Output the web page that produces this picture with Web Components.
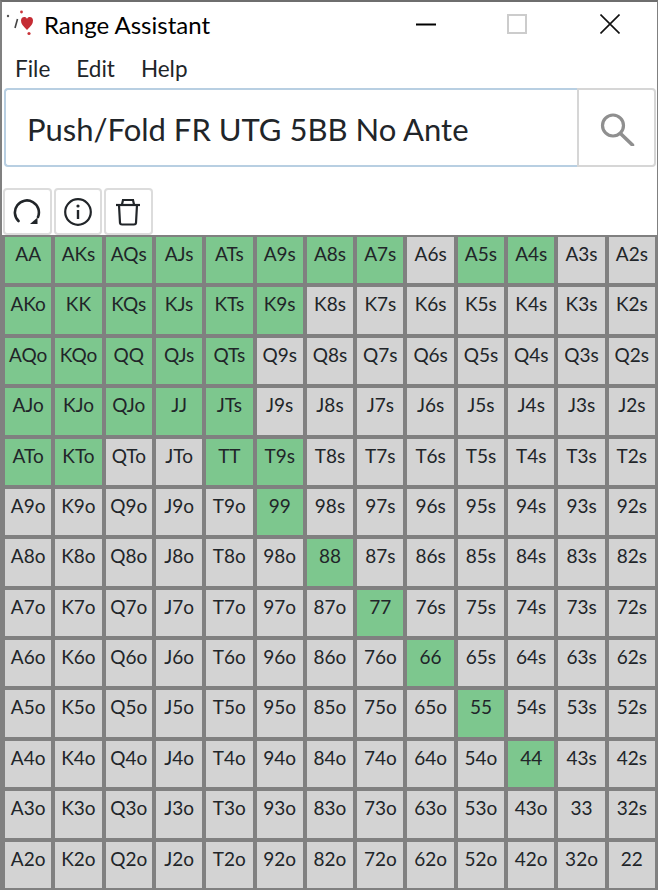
<!DOCTYPE html>
<html>
<head>
<meta charset="utf-8">
<title>Range Assistant</title>
<style>
    html, body { margin: 0; height: 100%; background: #fff; overflow: hidden; }
    body { font-family: Lato, "Noto Sans", sans-serif; color: #212529; }
    range-app { width: 658px; height: 890px; }
</style>
</head>
<body>
<range-app></range-app>
<script>
class TitleBar extends HTMLElement {
    constructor() {
        super();
        this.attachShadow({ mode: 'open' });
        this.shadowRoot.innerHTML = `
            <style>
                :host { display: flex; align-items: center; height: 46px; color: #000; }
                .logo { width: 42px; height: 40px; flex: none; }
                .name { font-size: 24px; flex: 1; padding-bottom: 2px; }
                .btns { display: flex; align-items: center; padding-bottom: 2px; }
                svg { display: block; }
            </style>
            <svg class="logo" viewBox="0 0 42 40">
                <circle cx="6" cy="11" r="1.2" fill="#555"/>
                <path d="M13 23 L15.5 14" stroke="#444" stroke-width="1.6"/>
                <circle cx="19.5" cy="7" r="1.4" fill="#c9343a"/>
                <circle cx="27" cy="28.5" r="1.6" fill="#c9343a"/>
                <path d="M25 25 C21 21 19 19 19 15.5 C19 11.5 24 11 25 14 C26 11 31 11.5 31 15.5 C31 19 29 21 25 25 Z" fill="#c52b33"/>
            </svg>
            <span class="name"><slot></slot></span>
            <div class="btns">
                <svg width="20" height="20" viewBox="0 0 20 20" style="margin-right:71px"><path d="M0 10.5 H20" stroke="#000" stroke-width="2"/></svg>
                <svg width="20" height="20" viewBox="0 0 20 20" style="margin-right:73px"><rect x="1" y="1" width="18" height="18" fill="none" stroke="#ccc" stroke-width="2"/></svg>
                <svg width="20" height="20" viewBox="0 0 20 20" style="margin-right:37px"><path d="M0.5 0.5 L19.5 19.5 M19.5 0.5 L0.5 19.5" stroke="#111" stroke-width="1.6"/></svg>
            </div>
        `;
    }
}
customElements.define('title-bar', TitleBar);

class MenuBar extends HTMLElement {
    constructor() {
        super();
        this.attachShadow({ mode: 'open' });
        this.shadowRoot.innerHTML = `
            <style>
                :host { display: flex; gap: 26px; height: 40px; align-items: center; padding-left: 13px; font-size: 22.5px; color: #212529; }
            </style>
            <span>File</span><span>Edit</span><span>Help</span>
        `;
    }
}
customElements.define('menu-bar', MenuBar);

class SearchBox extends HTMLElement {
    constructor() {
        super();
        this.attachShadow({ mode: 'open' });
        this.shadowRoot.innerHTML = `
            <style>
                :host { display: flex; height: 79px; margin-left: 2px; width: 652px; box-sizing: border-box; }
                .field { flex: 1; border: 2px solid #b8cfe2; border-right: none; border-radius: 4px 0 0 4px;
                    display: flex; align-items: center; padding: 2px 0 0 21px; font-size: 31px; color: #212529; }
                .go { width: 79px; border: 2px solid #d6d6d6; border-radius: 0 4px 4px 0;
                    display: flex; align-items: center; justify-content: center; box-sizing: border-box; }
            </style>
            <div class="field"><slot></slot></div>
            <div class="go">
                <svg width="36" height="36" viewBox="0 0 36 36" fill="none" stroke="#8f8f8f" stroke-width="3.2">
                    <circle cx="14" cy="15.5" r="10.5"/>
                    <path d="M21.5 23.5 L33.5 35" stroke-width="3.6" stroke-linecap="round"/>
                </svg>
            </div>
        `;
    }
}
customElements.define('search-box', SearchBox);

class ToolButton extends HTMLElement {
    constructor() {
        super();
        this.attachShadow({ mode: 'open' });
        this.shadowRoot.innerHTML = `
            <style>
                :host { display: flex; width: 48.5px; height: 47px; box-sizing: border-box; align-items: center; justify-content: center;
                    border: 2px solid #dcdcdc; border-radius: 4px; background: #fff; }
            </style>
            <slot></slot>
        `;
    }
}
customElements.define('tool-button', ToolButton);

class RangeCell extends HTMLElement {
    static get observedAttributes() { return ['label']; }
    constructor() {
        super();
        this.attachShadow({ mode: 'open' });
        this.shadowRoot.innerHTML = `
            <style>
                :host { display: block; background: #d3d3d3; text-align: center; font-size: 19px; line-height: 33px; color: #212529; min-width: 0; overflow: hidden; }
                :host([on]) { background: #7dc78e; }
            </style>
            <span></span>
        `;
    }
    attributeChangedCallback(name, oldVal, val) {
        this.shadowRoot.querySelector('span').textContent = val;
    }
}
customElements.define('range-cell', RangeCell);

class RangeGrid extends HTMLElement {
    constructor() {
        super();
        this.attachShadow({ mode: 'open' });
        this.shadowRoot.innerHTML = `
            <style>
                :host { display: grid; grid-template-columns: repeat(13, 1fr); grid-template-rows: repeat(13, 1fr);
                    gap: 4px; padding: 2px 2px 2px 3px; background: #808080; flex: 1; min-height: 0; }
            </style>
        `;
        const ranks = 'AKQJT98765432';
        const on = new Set(('AA AKs AQs AJs ATs A9s A8s A7s A5s A4s AKo KK KQs KJs KTs K9s AQo KQo QQ QJs QTs ' +
            'AJo KJo QJo JJ JTs ATo KTo TT T9s 99 88 77 66 55 44').split(' '));
        for (let r = 0; r < 13; r++) {
            for (let c = 0; c < 13; c++) {
                let hand;
                if (r == c) hand = ranks[r] + ranks[c];
                else if (c > r) hand = ranks[r] + ranks[c] + 's';
                else hand = ranks[c] + ranks[r] + 'o';
                const cell = document.createElement('range-cell');
                cell.setAttribute('label', hand);
                if (on.has(hand)) cell.setAttribute('on', '');
                this.shadowRoot.appendChild(cell);
            }
        }
    }
}
customElements.define('range-grid', RangeGrid);

class RangeApp extends HTMLElement {
    constructor() {
        super();
        this.attachShadow({ mode: 'open' });
        this.shadowRoot.innerHTML = `
            <style>
                :host { display: flex; flex-direction: column; box-sizing: border-box; border-top: 2px solid #6e6e6e; border-left: 2px solid #808080; border-right: 1px solid #808080; }
                .tools { display: flex; gap: 2px; margin: 21px 0 0 1px; }
                svg { display: block; }
            </style>
            <title-bar>Range Assistant</title-bar>
            <menu-bar></menu-bar>
            <search-box>Push/Fold FR UTG 5BB No Ante</search-box>
            <div class="tools">
                <tool-button><svg width="28" height="28" viewBox="0 0 28 28" fill="none" stroke="#212529" stroke-width="2.6">
                    <path d="M5.5 23 A12 12 0 1 1 25 19" stroke-linecap="round"/><path d="M17 26 L24.5 26 L24.5 19.5 Z" fill="#212529" stroke="none"/></svg></tool-button>
                <tool-button><svg width="30" height="30" viewBox="0 0 30 30" fill="none" stroke="#212529" stroke-width="2.2">
                    <circle cx="15" cy="15" r="12.8"/><path d="M15 13 V22" stroke-width="2.4"/><circle cx="15" cy="9" r="1.6" fill="#212529" stroke="none"/></svg></tool-button>
                <tool-button><svg width="26" height="28" viewBox="0 0 26 28" fill="none" stroke="#212529" stroke-width="2.2">
                    <path d="M1 7 H25"/><path d="M4 7 L5 25 Q5.2 26.5 7 26.5 H19 Q20.8 26.5 21 25 L22 7"/><path d="M7 6.5 L8 2 H18 L19 6.5"/></svg></tool-button>
            </div>
            <range-grid></range-grid>
        `;
    }
}
customElements.define('range-app', RangeApp);
</script>
</body>
</html>
